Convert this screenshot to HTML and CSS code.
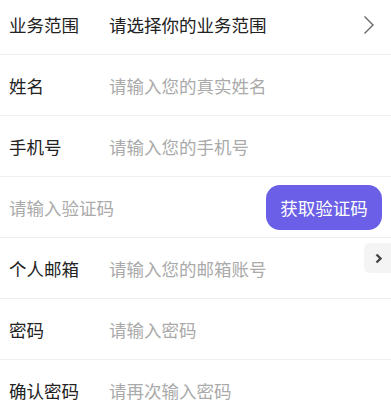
FILE: index.html
```html
<!DOCTYPE html>
<html lang="zh">
<head>
<meta charset="utf-8">
<link rel="stylesheet" href="styles.css">
</head>
<body>
<div class="form">
  <div class="row first">
    <span class="label">业务范围</span>
    <span class="value">请选择你的业务范围</span>
    <svg class="arrow" width="12" height="20" viewBox="0 0 12 20"><path d="M1.5 1.5 L10 10 L1.5 18.5" fill="none" stroke="#666" stroke-width="1.4"/></svg>
  </div>
  <div class="row">
    <span class="label">姓名</span>
    <span class="ph">请输入您的真实姓名</span>
  </div>
  <div class="row">
    <span class="label">手机号</span>
    <span class="ph">请输入您的手机号</span>
  </div>
  <div class="row code">
    <span class="ph">请输入验证码</span>
    <button class="btn">获取验证码</button>
  </div>
  <div class="row">
    <span class="label">个人邮箱</span>
    <span class="ph">请输入您的邮箱账号</span>
  </div>
  <div class="row">
    <span class="label">密码</span>
    <span class="ph">请输入密码</span>
  </div>
  <div class="row">
    <span class="label">确认密码</span>
    <span class="ph">请再次输入密码</span>
  </div>
</div>
<div class="tab">
  <svg width="8" height="11" viewBox="0 0 8 11"><path d="M1.5 1.5 L5.5 5.5 L1.5 9.5" fill="none" stroke="#444" stroke-width="2.4"/></svg>
</div>
</body>
</html>
```
FILE: styles.css
```css
html, body {
  margin: 0;
  padding: 0;
  background: #fff;
}
body {
  font-family: "Noto Sans CJK SC", "Noto Sans", sans-serif;
  font-size: 17.5px;
  overflow: hidden;
  position: relative;
  width: 391px;
  height: 418px;
}
.form {
  margin-top: -6px;
}
.row {
  height: 61px;
  box-sizing: border-box;
  border-bottom: 1px solid #f0f0f0;
  display: flex;
  align-items: center;
  padding: 1px 0 0 9px;
  position: relative;
}
.label {
  width: 100px;
  color: #222;
  flex: none;
}
.value {
  color: #222;
  flex: 1;
}
.ph {
  color: #aaa;
  flex: 1;
}
.arrow {
  margin-right: 16px;
  margin-top: 0;
}
.row.code {
  padding-top: 1px;
}
.btn {
  border: none;
  background: #6a5fe6;
  color: #fff;
  font-family: inherit;
  font-size: 17.5px;
  width: 116px;
  height: 45px;
  border-radius: 14px;
  margin-right: 9px;
  padding: 0;
}
.tab {
  position: absolute;
  right: 0;
  top: 243px;
  width: 27px;
  height: 30px;
  background: #f4f4f4;
  border-radius: 6px 0 0 6px;
  display: flex;
  align-items: center;
  justify-content: center;
}
.tab svg {
  margin-left: 2px;
}
```
